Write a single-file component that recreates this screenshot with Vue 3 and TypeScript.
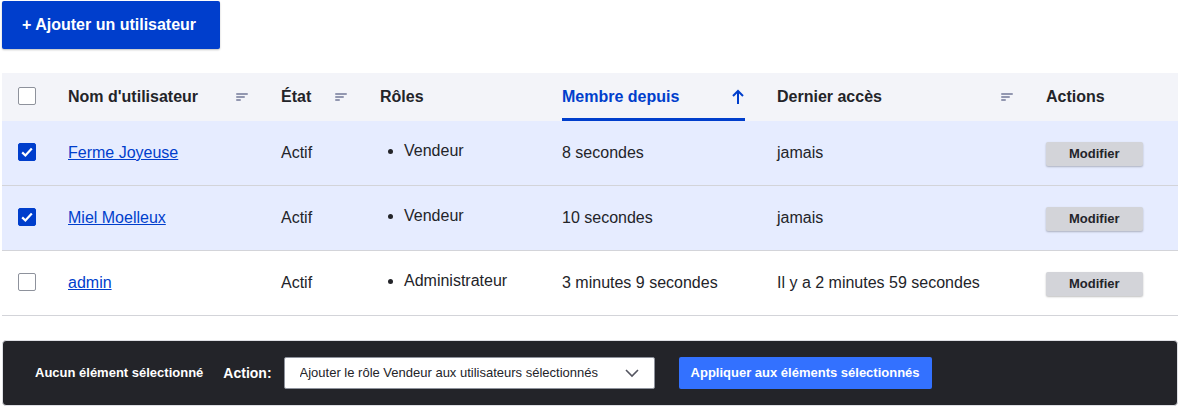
<script setup lang="ts">
import { computed, ref } from 'vue'

interface User {
  id: number
  name: string
  status: string
  roles: string[]
  memberSince: string
  lastAccess: string
  selected: boolean
}

interface Column {
  key: string
  label: string
  sortable: boolean
}

const columns: Column[] = [
  { key: 'name', label: "Nom d'utilisateur", sortable: true },
  { key: 'status', label: 'État', sortable: true },
  { key: 'roles', label: 'Rôles', sortable: false },
  { key: 'since', label: 'Membre depuis', sortable: true },
  { key: 'access', label: 'Dernier accès', sortable: true },
  { key: 'actions', label: 'Actions', sortable: false },
]

const users = ref<User[]>([
  { id: 3, name: 'Ferme Joyeuse', status: 'Actif', roles: ['Vendeur'], memberSince: '8 secondes', lastAccess: 'jamais', selected: true },
  { id: 2, name: 'Miel Moelleux', status: 'Actif', roles: ['Vendeur'], memberSince: '10 secondes', lastAccess: 'jamais', selected: true },
  { id: 1, name: 'admin', status: 'Actif', roles: ['Administrateur'], memberSince: '3 minutes 9 secondes', lastAccess: 'Il y a 2 minutes 59 secondes', selected: false },
])

const activeSort = ref('since')
const action = ref('add-vendor')

const allSelected = computed<boolean>({
  get: () => users.value.every((user) => user.selected),
  set: (value) => users.value.forEach((user) => (user.selected = value)),
})
</script>

<template>
  <main class="page">
    <button type="button" class="button button-primary">+ Ajouter un utilisateur</button>

    <table class="users">
      <colgroup>
        <col class="col-check" />
        <col v-for="column in columns" :key="column.key" :class="`col-${column.key}`" />
      </colgroup>
      <thead>
        <tr>
          <th scope="col">
            <input v-model="allSelected" type="checkbox" class="checkbox" aria-label="Tout sélectionner" />
          </th>
          <th
            v-for="column in columns"
            :key="column.key"
            scope="col"
            :aria-sort="column.key === activeSort ? 'ascending' : undefined"
          >
            <a
              v-if="column.sortable"
              href="#"
              class="sort"
              :class="{ 'sort-active': column.key === activeSort }"
              @click.prevent="activeSort = column.key"
            >
              <span>{{ column.label }}</span>
              <svg v-if="column.key === activeSort" class="sort-icon" viewBox="0 0 14 16" aria-hidden="true">
                <path d="M7 15V2M2 7l5-5 5 5" fill="none" stroke="#003ecc" stroke-width="2" />
              </svg>
              <svg v-else class="sort-icon" viewBox="0 0 14 16" aria-hidden="true">
                <path d="M2 5h10M2 8h7M2 11h3" fill="none" stroke="#9297b0" stroke-width="2" stroke-linecap="round" />
              </svg>
            </a>
            <template v-else>{{ column.label }}</template>
          </th>
        </tr>
      </thead>
      <tbody>
        <tr v-for="user in users" :key="user.id" :class="{ selected: user.selected }">
          <td>
            <input v-model="user.selected" type="checkbox" class="checkbox" :aria-label="`Sélectionner ${user.name}`" />
          </td>
          <td><a href="#" class="user-link">{{ user.name }}</a></td>
          <td>{{ user.status }}</td>
          <td>
            <ul class="roles">
              <li v-for="role in user.roles" :key="role">{{ role }}</li>
            </ul>
          </td>
          <td>{{ user.memberSince }}</td>
          <td>{{ user.lastAccess }}</td>
          <td><button type="button" class="button button-small">Modifier</button></td>
        </tr>
      </tbody>
    </table>

    <form class="bulk" @submit.prevent>
      <span class="bulk-status">Aucun élément sélectionné</span>
      <label class="bulk-label" for="bulk-action">Action:</label>
      <span class="select-wrap">
        <select id="bulk-action" v-model="action" class="select">
          <option value="add-vendor">Ajouter le rôle Vendeur aux utilisateurs sélectionnés</option>
        </select>
        <svg class="chevron" viewBox="0 0 14 9" aria-hidden="true">
          <path d="M1 1l6 6 6-6" fill="none" stroke="#545560" stroke-width="1.6" />
        </svg>
      </span>
      <button type="submit" class="button button-apply">Appliquer aux éléments sélectionnés</button>
    </form>
  </main>
</template>

<style>
body {
  margin: 0;
  background: #fff;
}
</style>

<style scoped>
.page {
  box-sizing: border-box;
  padding: 1px 0 0 2px;
  color: #232429;
  font: 16px/24px "Liberation Sans", Arial, sans-serif;
}

.button {
  display: block;
  margin: 0;
  border: 0;
  border-radius: 2px;
  font-family: inherit;
  font-weight: 700;
  white-space: nowrap;
  cursor: pointer;
}

.button-primary {
  padding: 12px 24px 12px 20px;
  background: #003ecc;
  box-shadow: 0 1px 2px rgba(0, 0, 0, 0.25);
  color: #fff;
  font-size: 16px;
  line-height: 24px;
}

.users {
  width: 100%;
  margin: 24px 0;
  border-collapse: separate;
  border-spacing: 0;
  table-layout: fixed;
}

.col-check { width: 50px; }
.col-name { width: 213px; }
.col-status { width: 99px; }
.col-roles { width: 182px; }
.col-since { width: 215px; }
.col-access { width: 269px; }
.col-actions { width: 148px; }

th {
  height: 48px;
  padding: 0 16px;
  background: #f3f4f9;
  font-weight: 700;
  text-align: left;
}

td {
  height: 64px;
  padding: 0 16px;
  border-bottom: 1px solid #d3d4d9;
}

.selected td {
  background: #e6ecff;
}

.sort {
  display: flex;
  align-items: center;
  justify-content: space-between;
  box-sizing: border-box;
  height: 48px;
  border: 0 solid transparent;
  border-width: 3px 0;
  color: inherit;
  text-decoration: none;
  white-space: nowrap;
}

.sort-active {
  border-bottom-color: #003ecc;
  color: #003ecc;
}

.sort-icon {
  flex: none;
  width: 14px;
  height: 16px;
}

.checkbox {
  appearance: none;
  display: block;
  box-sizing: border-box;
  width: 18px;
  height: 18px;
  margin: 0 0 2px;
  border: 1px solid #8e929c;
  border-radius: 2px;
  background: #fff;
}

.checkbox:checked {
  border-color: #003ecc;
  background: #003ecc url("data:image/svg+xml,%3Csvg xmlns='http://www.w3.org/2000/svg' viewBox='0 0 16 16'%3E%3Cpath d='M3.2 8.4l3.2 3.1L12.8 4.4' fill='none' stroke='%23fff' stroke-width='2.2'/%3E%3C/svg%3E") center / 16px 16px no-repeat;
}

.user-link {
  color: #003ecc;
}

.roles {
  margin: 0 0 4px;
  padding: 0 0 0 24px;
}

.button-small {
  margin-top: 2px;
  padding: 4px 23px;
  background: #d3d4d9;
  box-shadow: 0 1px 2px rgba(0, 0, 0, 0.25);
  color: #232429;
  font-size: 13px;
  line-height: 16px;
}

.bulk {
  display: flex;
  align-items: center;
  padding: 16px 32px;
  border: 1px solid #dedfe4;
  border-radius: 4px;
  background: #232429;
  color: #fff;
  font-size: 13px;
  font-weight: 700;
}

.bulk-label {
  margin: 0 12px 0 20px;
  font-size: 14px;
}

.select-wrap {
  position: relative;
  margin-right: 24px;
}

.select {
  appearance: none;
  display: block;
  box-sizing: border-box;
  width: 371px;
  height: 32px;
  margin: 0;
  padding: 0 48px 0 15px;
  border: 1px solid #8e929c;
  border-radius: 2px;
  background: #fff;
  color: #232429;
  font: 13px/16px "Liberation Sans", Arial, sans-serif;
}

.chevron {
  position: absolute;
  top: 12px;
  right: 16px;
  width: 14px;
  height: 9px;
  pointer-events: none;
}

.button-apply {
  padding: 8px 12px;
  background: #3371ff;
  color: #fff;
  font-size: 13px;
  line-height: 16px;
}
</style>
